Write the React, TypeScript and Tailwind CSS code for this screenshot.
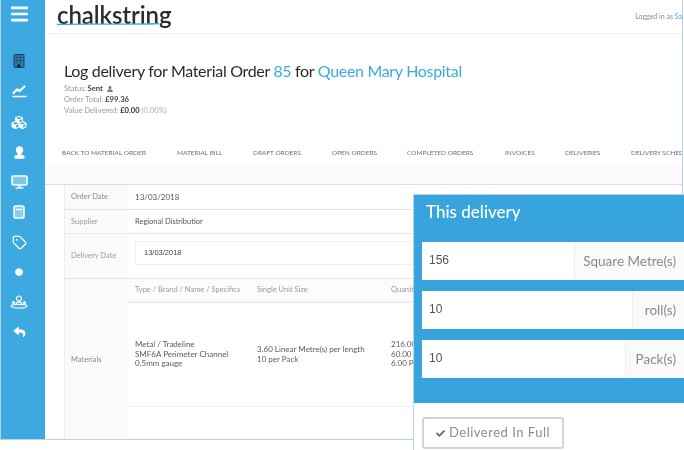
import { FaBars, FaCheck, FaCircle, FaCubes, FaReply, FaUser } from "react-icons/fa";
import { Tag } from "lucide-react";

const navItems = [
  { label: "Back to material order", width: "w-[115px]" },
  { label: "Material bill", width: "w-[76px]" },
  { label: "Draft orders", width: "w-[79px]" },
  { label: "Open orders", width: "w-[75px]" },
  { label: "Completed orders", width: "w-[98px]" },
  { label: "Invoices", width: "w-[60px]" },
  { label: "Deliveries", width: "w-[66px]" },
  { label: "Delivery schedule", width: "w-[90px]" },
];

function TabletIcon() {
  return (
    <svg width="12" height="14" viewBox="0 0 12 14">
      <rect x="1" y="0.500" width="10" height="13" rx="0.800" fill="#2b7eab" stroke="#1b3f58" strokeWidth="1" />
      <path d="M4 1v9M7.500 1v9M1.500 3.500h9M1.500 6.500h9" stroke="#1b3f58" strokeWidth="0.600" />
      <rect x="4" y="10.500" width="3.500" height="2.500" fill="#12293b" />
    </svg>
  );
}

function TrendIcon() {
  return (
    <svg width="15" height="13" viewBox="0 0 15 13" fill="none" stroke="white" strokeLinecap="round">
      <path d="M1.500 8 L5 4.500 L7.500 6 L12.500 1.500" strokeWidth="2.200" strokeLinejoin="round" />
      <path d="M1 11.500h13" strokeWidth="1.600" />
    </svg>
  );
}

function PersonIcon() {
  return (
    <svg width="11" height="13" viewBox="0 0 11 13" fill="white">
      <circle cx="5.500" cy="4" r="3.700" />
      <rect x="3.500" y="6" width="4" height="3" />
      <rect x="0.500" y="9" width="10" height="3.800" rx="1.600" />
    </svg>
  );
}

function MonitorIcon() {
  return (
    <svg width="17" height="14" viewBox="0 0 17 14" fill="none">
      <rect x="1" y="1" width="15" height="9" rx="1.500" stroke="white" strokeWidth="1.600" fill="#7fc8ec" />
      <path d="M8.500 10.500v1.800" stroke="white" strokeWidth="2" />
      <path d="M4.500 13h8" stroke="white" strokeWidth="1.400" />
    </svg>
  );
}

function CalcIcon() {
  return (
    <svg width="12" height="14" viewBox="0 0 12 14" fill="none">
      <rect x="1" y="1" width="10" height="12" rx="1.800" stroke="white" strokeWidth="1.500" fill="#8ccdee" />
      <path d="M3 4.500h6" stroke="white" strokeWidth="1.400" />
    </svg>
  );
}

function TeamIcon() {
  return (
    <svg width="18" height="14" viewBox="0 0 18 14" fill="none" stroke="white" strokeWidth="1.200">
      <circle cx="9" cy="3.500" r="2.500" />
      <path d="M5.500 10c.5-2 1.800-3.200 3.500-3.200s3 1.200 3.500 3.200" />
      <ellipse cx="9" cy="11.200" rx="8" ry="1.800" />
      <circle cx="3.500" cy="7.500" r="1.500" fill="white" stroke="none" />
      <circle cx="14.500" cy="7.500" r="1.500" fill="white" stroke="none" />
    </svg>
  );
}

function Sidebar() {
  return (
    <aside className="flex w-[45px] shrink-0 flex-col items-center border-l border-[#b9d3ea] bg-[#3caae0] pr-[8px] text-white">
      <div className="flex h-[50px] shrink-0 items-start pt-[4px]">
        <FaBars className="h-[20px] w-[17px]" />
      </div>
      <div className="flex flex-col items-center">
        <div className="flex h-[22px] items-center"><TabletIcon /></div>
        <div className="mt-[8px] flex h-[22px] items-center"><TrendIcon /></div>
        <div className="mt-[9px] flex h-[22px] items-center"><FaCubes className="h-[15px] w-[16px]" /></div>
        <div className="mt-[8px] flex h-[22px] items-center"><PersonIcon /></div>
        <div className="mt-[8px] flex h-[22px] items-center"><MonitorIcon /></div>
        <div className="mt-[8px] flex h-[22px] items-center"><CalcIcon /></div>
        <div className="mt-[8px] flex h-[22px] items-center"><Tag className="h-[15px] w-[15px]" strokeWidth={2} /></div>
        <div className="mt-[8px] flex h-[22px] items-center"><FaCircle className="h-[8px] w-[8px]" /></div>
        <div className="mt-[8px] flex h-[22px] items-center"><TeamIcon /></div>
        <div className="mt-[8px] flex h-[22px] items-center"><FaReply className="h-[12px] w-[13px]" /></div>
      </div>
    </aside>
  );
}

function Header() {
  return (
    <header className="flex h-[34px] shrink-0 items-start justify-between border-b border-[#eeeeee] pl-[12px]">
      <div className="relative pt-[2px]">
        <span className="block text-[24px] font-semibold leading-[26px] tracking-[-0.1px] text-[#2a2c30]">chalkstring</span>
        <svg className="absolute left-0 top-[22px]" width="105" height="4" viewBox="0 0 105 4">
          <path d="M0 2.500 C30 1.500, 70 3, 102 1.500" stroke="#3caae0" strokeWidth="1.300" fill="none" />
        </svg>
      </div>
      <span className="mt-[11px] whitespace-nowrap pr-0 text-[7px] text-[#8b8b8b]">
        Logged in as <span className="text-[#3caae0]">Sa</span>
      </span>
    </header>
  );
}

function Summary() {
  return (
    <section className="h-[96px] shrink-0 pl-[19px] pt-[26px]">
      <h1 className="whitespace-nowrap text-[16px] font-normal leading-[22px] tracking-[-0.32px] text-[#2b2b2b]">
        Log delivery for Material Order <span className="text-[#3caae0]">85</span> for{" "}
        <span className="text-[#3caae0]">Queen Mary Hospital</span>
      </h1>
      <div className="mt-[1px] text-[7.600px] leading-[11px] text-[#9a9a9a]">
        <p className="flex items-center gap-[1px]">
          Status: <b className="text-[#444444]">Sent</b>
          <FaUser className="ml-[3px] h-[6px] w-[6px] text-[#777777]" />
        </p>
        <p>
          Order Total: <b className="text-[#444444]">£99.36</b>
        </p>
        <p>
          Value Delivered: <b className="text-[#333333]">£0.00</b> <span className="text-[#b0b0b0]">(0.00%)</span>
        </p>
      </div>
    </section>
  );
}

function Nav() {
  return (
    <nav className="flex h-[34px] shrink-0 items-center overflow-hidden pl-[17px] pt-[12px]">
      {navItems.map((item) => (
        <span key={item.label} className={`${item.width} shrink-0 whitespace-nowrap text-[6.500px] uppercase text-[#6f6f6f]`}>
          {item.label}
        </span>
      ))}
    </nav>
  );
}

function OrderTable() {
  return (
    <div className="flex-1 border-t border-[#dddddd] bg-white pl-[19px]">
      <div className="h-full border-l border-[#eeeeee] text-[7.500px]">
        <div className="flex h-[25px] border-b border-[#e4e4e4]">
          <div className="flex w-[63px] shrink-0 items-center bg-[#fafafa] pl-[6px] text-[#8a8a8a]">Order Date</div>
          <div className="flex flex-1 items-center pl-[7px] text-[8px] text-[#555555]">13/03/2018</div>
        </div>
        <div className="flex h-[24px] border-b border-[#e8e8e8]">
          <div className="flex w-[63px] shrink-0 items-center bg-[#fafafa] pl-[6px] text-[#9a9a9a]">Supplier</div>
          <div className="flex flex-1 items-center pl-[7px] text-[#555555]">Regional Distributior</div>
        </div>
        <div className="flex h-[45px] border-b border-[#e4e4e4]">
          <div className="flex w-[63px] shrink-0 items-center bg-[#fafafa] pl-[6px] text-[#9a9a9a]">Delivery Date</div>
          <div className="flex-1 pl-[7px] pt-[7px]">
            <div className="flex h-[24px] items-center border border-[#eeeeee] pl-[8px] font-['Liberation_Sans',sans-serif] text-[7.500px] text-[#444444]">
              13/03/2018
            </div>
          </div>
        </div>
        <div className="flex h-[161px]">
          <div className="flex w-[63px] shrink-0 items-center bg-[#fafafa] pl-[6px] text-[#8a8a8a]">Materials</div>
          <div className="flex-1">
            <div className="flex h-[24px] items-center border-b-2 border-[#eeeeee] bg-[#fcfcfc] pl-[7px] text-[#9a9a9a]">
              <span className="w-[122px] shrink-0">Type / Brand / Name / Specifics</span>
              <span className="w-[134px] shrink-0">Single Unit Size</span>
              <span className="shrink-0">Quantity</span>
            </div>
            <div className="flex h-[104px] items-center border-b border-[#eeeeee] pl-[7px] text-[8px] text-[#5a5a5a]">
              <div className="w-[122px] shrink-0 leading-[9.500px]">
                <p>Metal / Tradeline</p>
                <p>SMF6A Perimeter Channel</p>
                <p>0.5mm gauge</p>
              </div>
              <div className="w-[134px] shrink-0 leading-[9.500px]">
                <p>3.60 Linear Metre(s) per length</p>
                <p>10 per Pack</p>
              </div>
              <div className="shrink-0 leading-[9.500px]">
                <p>216.00</p>
                <p>60.00</p>
                <p>6.00 P</p>
              </div>
            </div>
          </div>
        </div>
      </div>
    </div>
  );
}

function DeliveryRow({ value, unit, inputWidth }: { value: string; unit: string; inputWidth: string }) {
  return (
    <div className="flex h-[38px] bg-white text-[12px]">
      <div className={`${inputWidth} flex shrink-0 items-center pb-[2px] pl-[7px] font-['Liberation_Sans',sans-serif] text-[#555555]`}>{value}</div>
      <div className="flex flex-1 items-center justify-end whitespace-nowrap border-l border-[#eeeeee] bg-[#fafafa] pr-[8px] text-[13.500px] text-[#8a8a8a]">
        {unit}
      </div>
    </div>
  );
}

function DeliveryPanel() {
  return (
    <div className="absolute left-[413px] top-[194px] h-[256px] w-[271px] border-l border-t border-[#b9d3ea] bg-white">
      <div className="h-[208px] bg-[#37a4de] pl-[8px] pt-[7px]">
        <h2 className="pl-[4px] text-[17px] font-medium leading-[20px] text-white">This delivery</h2>
        <div className="mt-[20px] flex flex-col gap-[11px]">
          <DeliveryRow value="156" unit="Square Metre(s)" inputWidth="w-[152px]" />
          <DeliveryRow value="10" unit="roll(s)" inputWidth="w-[210px]" />
          <DeliveryRow value="10" unit="Pack(s)" inputWidth="w-[203px]" />
        </div>
      </div>
      <button className="ml-[8px] mt-[14px] flex h-[32px] w-[142px] items-center justify-center gap-[4px] rounded-[3px] border-2 border-[#d4d4d4] bg-white text-[13px] tracking-[0.5px] text-[#8c8c8c]">
        <FaCheck className="h-[9px] w-[9px] text-[#666666]" />
        Delivered In Full
      </button>
    </div>
  );
}

export default function App() {
  return (
    <div className="relative h-[450px] w-[684px] overflow-hidden bg-white font-['Lato',sans-serif] blur-[0.35px]">
      <div className="flex h-[440px] w-[683px] border-b border-r border-[#b9d3ea]">
        <Sidebar />
        <main className="flex min-w-0 flex-1 flex-col overflow-hidden">
          <Header />
          <Summary />
          <Nav />
          <div className="h-[20px] shrink-0 bg-[#fafafa]" />
          <OrderTable />
        </main>
      </div>
      <DeliveryPanel />
    </div>
  );
}
